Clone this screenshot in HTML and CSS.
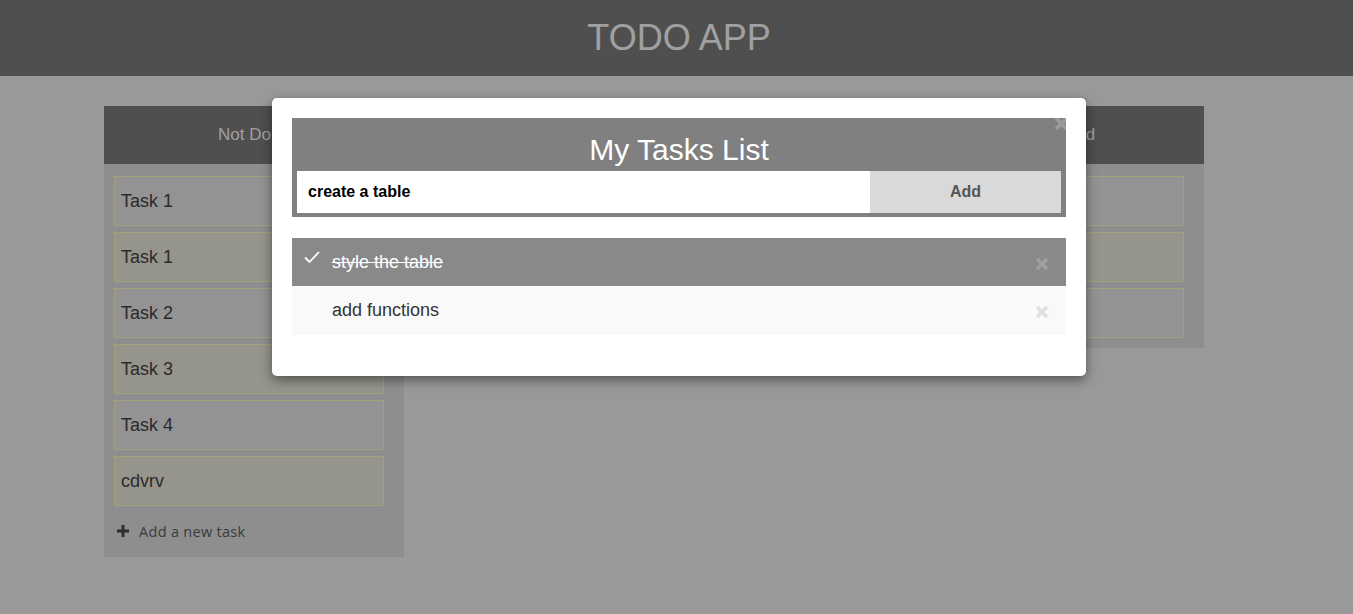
FILE: index.html
```html
<!DOCTYPE html>
<html lang="en">
<head>
<meta charset="utf-8">
<title>TODO APP</title>
<link rel="stylesheet" href="styles.css">
</head>
<body>
<header class="topbar"><h1 class="app-title">TODO APP</h1></header>
<main class="board">
  <section class="column">
    <div class="col-head">Not Done</div>
    <div class="col-body">
      <div class="card">Task 1</div>
      <div class="card">Task 1</div>
      <div class="card">Task 2</div>
      <div class="card">Task 3</div>
      <div class="card">Task 4</div>
      <div class="card">cdvrv</div>
      <div class="add-task">
        <svg class="plus" width="12" height="12" viewBox="0 0 12 12"><path d="M6 0v12M0 6h12" stroke="#2e2e2e" stroke-width="3"/></svg>
        <span>Add a new task</span>
      </div>
    </div>
  </section>
  <section class="column">
    <div class="col-head">In Progress</div>
    <div class="col-body">
      <div class="card">Task 5</div>
      <div class="card">Task 6</div>
      <div class="card">Task 7</div>
    </div>
  </section>
  <section class="column">
    <div class="col-head">Completed</div>
    <div class="col-body">
      <div class="card">Task 8</div>
      <div class="card">Task 9</div>
      <div class="card">Task 10</div>
    </div>
  </section>
</main>
<div class="overlay">
  <div class="modal">
    <svg class="close-x" width="15" height="15" viewBox="0 0 14 14"><path d="M2 2L12 12M12 2L2 12" stroke="currentColor" stroke-width="3.6"/></svg>
    <div class="panel">
      <h2 class="panel-title">My Tasks List</h2>
      <div class="add-form">
        <div class="task-input">create a table</div>
        <div class="add-btn">Add</div>
      </div>
    </div>
    <ul class="task-list">
      <li class="task-row done">
        <svg class="check" width="16" height="12" viewBox="0 0 16 12"><path d="M1 6.5L5.5 11L15 1" fill="none" stroke="#fff" stroke-width="1.8"/></svg>
        <span class="task-text">style the table</span>
        <svg class="remove" width="14" height="14" viewBox="0 0 14 14"><path d="M2 2L12 12M12 2L2 12" stroke="currentColor" stroke-width="3.6"/></svg>
      </li>
      <li class="task-row">
        <span class="task-text">add functions</span>
        <svg class="remove" width="14" height="14" viewBox="0 0 14 14"><path d="M2 2L12 12M12 2L2 12" stroke="currentColor" stroke-width="3.6"/></svg>
      </li>
    </ul>
  </div>
</div>
</body>
</html>
```
FILE: styles.css
```css
* { box-sizing: border-box; }
html, body { margin: 0; padding: 0; }
body {
  background: #999999;
  font-family: "Liberation Sans", Arial, sans-serif;
  min-height: 614px;
  overflow: hidden;
}
.topbar {
  height: 76px;
  background: #4f4f4f;
}
.app-title {
  margin: 0;
  padding-left: 5px;
  font-size: 36px;
  font-weight: normal;
  line-height: 76px;
  text-align: center;
  color: #a0a0a0;
}
.board {
  display: flex;
  align-items: flex-start;
  gap: 100px;
  padding: 30px 0 0 104px;
}
.column {
  flex: none;
  width: 300px;
  background: #8e8e8e;
}
.col-head {
  height: 58px;
  line-height: 58px;
  background: #4f4f4f;
  color: #a0a0a0;
  font-size: 17px;
  text-align: center;
}
.col-body {
  padding: 12px 20px 4px 10px;
}
.card {
  height: 50px;
  margin-bottom: 6px;
  padding-left: 6px;
  border: 1px solid #a6a07a;
  background: #939393;
  color: #2a2a2a;
  font-size: 18px;
  line-height: 48px;
}
.card:nth-child(even) { background: #96958c; }
.add-task {
  display: flex;
  align-items: center;
  gap: 10px;
  padding: 9px 0 12px 3px;
  height: 41px;
  font-family: "Open Sans", sans-serif;
  font-size: 14.5px;
  letter-spacing: 0.3px;
  color: #3a3a3a;
}
.plus { flex: none; }
.overlay {
  position: fixed;
  inset: 0;
  display: flex;
  justify-content: center;
  align-items: flex-start;
  padding: 98px 0 0 5px;
}
.modal {
  position: relative;
  width: 814px;
  padding: 20px 20px 41px;
  background: #ffffff;
  border-radius: 5px;
  box-shadow: 0 4px 12px rgba(0, 0, 0, 0.45);
}
.close-x {
  position: absolute;
  top: 18px;
  right: 17px;
  color: rgba(255, 255, 255, 0.22);
}
.panel {
  background: #808080;
  padding: 0 5px 4px;
}
.panel-title {
  margin: 0;
  padding: 15px 0 5px;
  font-size: 30px;
  font-weight: normal;
  line-height: 33px;
  text-align: center;
  color: #ffffff;
}
.add-form {
  display: flex;
  height: 42px;
}
.task-input {
  flex: 1;
  background: #ffffff;
  padding-left: 11px;
  font-size: 16px;
  font-weight: bold;
  line-height: 42px;
  color: #000;
}
.add-btn {
  width: 191px;
  background: #d9d9d9;
  font-size: 16px;
  font-weight: bold;
  line-height: 42px;
  text-align: center;
  color: #555;
}
.task-list {
  list-style: none;
  margin: 21px 0 0;
  padding: 0;
}
.task-row {
  position: relative;
  display: flex;
  align-items: center;
  height: 49px;
  padding: 0 17px 0 40px;
  background: #f9f9f9;
  color: #333;
  font-size: 18px;
}
.task-row.done {
  height: 48px;
  background: #898989;
  color: #ffffff;
}
.task-row.done .task-text { text-decoration: line-through; }
.task-text { flex: 1; }
.check {
  position: absolute;
  left: 12px;
  top: 13px;
}
.remove {
  margin-top: 3px;
  color: rgba(190, 190, 190, 0.43);
}
```
